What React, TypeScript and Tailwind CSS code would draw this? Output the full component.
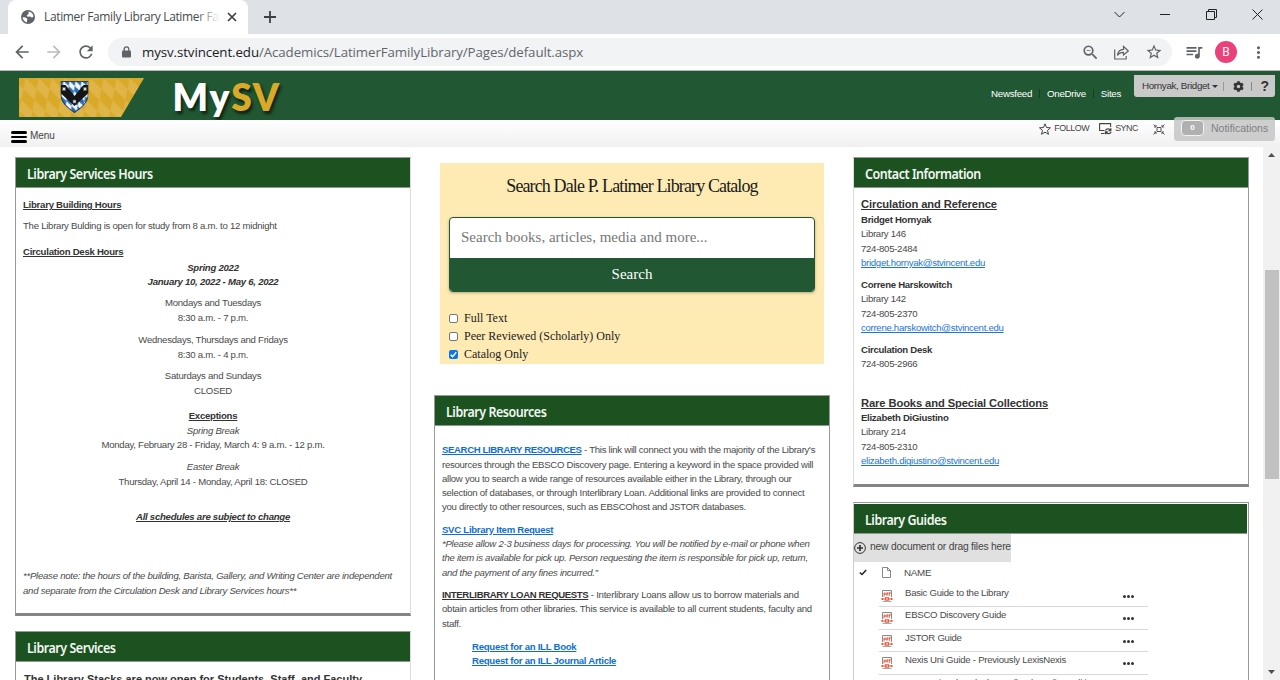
import type { ReactNode } from "react";
import {
  MdArrowBack,
  MdArrowForward,
  MdMoreVert,
  MdOutlineZoomOut,
  MdQueueMusic,
  MdRefresh,
  MdStarBorder,
} from "react-icons/md";
import { FaCog } from "react-icons/fa";

function TabStrip() {
  return (
    <div className="flex h-[34px] shrink-0 items-end bg-[#dee1e6] pl-2">
      <div className="flex h-[34px] w-[240px] items-center rounded-t-lg bg-white pl-[13px] pr-[10px]">
        <svg className="h-[14px] w-[14px] shrink-0" viewBox="0 0 14 14">
          <circle cx="7" cy="7" r="7" fill="#5f6368" />
          <path d="M1.500 7.300l3.200.2 1.800 1.600-.6 1.700.3 1.700C3.500 12 1.600 9.800 1.500 7.300z" fill="#fff" />
          <path d="M7.500 1.500c2.600.2 4.700 2.200 5 4.800l-1.400 1.500-2-1.300-2.600.2-.8-1.500 1.900-1.100z" fill="#fff" />
        </svg>
        <div className="relative ml-[9px] w-[176px] overflow-hidden whitespace-nowrap font-['Open_Sans',sans-serif] text-[12px] leading-[18px] tracking-[-0.360px] text-[#45494d]">
          Latimer Family Library Latimer Fami
          <div className="absolute inset-y-0 right-0 w-[24px] bg-gradient-to-r from-white/0 to-white" />
        </div>
        <svg className="ml-[7px] h-[10px] w-[10px] shrink-0" viewBox="0 0 10 10" stroke="#3c4043" strokeWidth="1.7">
          <path d="M1 1l8 8M9 1l-8 8" />
        </svg>
      </div>
      <svg className="mb-[11px] ml-[16px] h-[12px] w-[12px]" viewBox="0 0 12 12" stroke="#3c4043" strokeWidth="1.8">
        <path d="M6 0v12M0 6h12" />
      </svg>
      <div className="ml-auto flex h-[28px] items-center gap-[35px] self-start pr-[17px] text-[#222]">
        <svg className="h-[11px] w-[11px]" viewBox="0 0 11 11" fill="none" stroke="currentColor">
          <path d="M0.5 3l5 5 5-5" />
        </svg>
        <svg className="h-[11px] w-[11px]" viewBox="0 0 11 11" fill="none" stroke="currentColor">
          <path d="M0 5.5h10" />
        </svg>
        <svg className="h-[11px] w-[11px]" viewBox="0 0 11 11" fill="none" stroke="currentColor">
          <path d="M0.5 2.5h8v8h-8zM2.5 2.5v-2h8v8h-2" />
        </svg>
        <svg className="h-[11px] w-[11px]" viewBox="0 0 11 11" fill="none" stroke="currentColor">
          <path d="M0.5 0.5l10 10M10.500 0.500l-10 10" />
        </svg>
      </div>
    </div>
  );
}

function Toolbar() {
  return (
    <div className="flex h-[37px] shrink-0 items-center border-b border-[#b5babd] bg-white pl-[12px] text-[#5f6368]">
      <MdArrowBack className="h-[20px] w-[20px]" />
      <MdArrowForward className="ml-[12px] h-[20px] w-[20px] text-[#babcbe]" />
      <MdRefresh className="ml-[12px] h-[20px] w-[20px]" />
      <div className="ml-[12px] flex h-[28px] w-[1064px] items-center rounded-full bg-[#f1f3f4] pl-[14px] pr-[9px]">
        <svg className="h-[12px] w-[9px]" viewBox="0 0 9 12">
          <rect y="4.500" width="9" height="7" rx="1" fill="#5f6368" />
          <path d="M2.200 5V3.200a2.300 2.300 0 014.600 0V5" fill="none" stroke="#5f6368" strokeWidth="1.300" />
        </svg>
        <span className="ml-[11px] whitespace-nowrap font-['Open_Sans',sans-serif] text-[13.300px] leading-[20px] tracking-[-0.095px] text-[#63676b]">
          <span className="text-[#202124]">mysv.stvincent.edu</span>/Academics/LatimerFamilyLibrary/Pages/default.aspx
        </span>
        <MdOutlineZoomOut className="ml-auto h-[19px] w-[19px]" />
        <svg className="ml-[14px] mr-[1px] h-[15px] w-[15px]" viewBox="0 0 15 15" fill="none" stroke="currentColor" strokeWidth="1.2">
          <path d="M0.700 4.500v9.500h11.500v-3" />
          <path d="M3.500 10.500c.4-4 2.500-6 6-6.200V1.500L14.300 6 9.500 10V7.400c-2.700 0-4.600.9-6 3.100z" />
        </svg>
        <MdStarBorder className="ml-[15px] h-[18px] w-[18px]" />
      </div>
      <MdQueueMusic className="ml-[12px] h-[20px] w-[20px]" />
      <div className="ml-[11px] flex h-[22px] w-[22px] items-center justify-center rounded-full bg-[#ec407a] font-['Roboto',sans-serif] text-[12px] text-white">
        B
      </div>
      <MdMoreVert className="ml-[12px] h-[19px] w-[19px]" />
    </div>
  );
}

function CrestBanner() {
  return (
    <svg className="h-[39px] w-[125px]" viewBox="0 0 125 39">
      <defs>
        <pattern id="lozenge" width="13" height="22" patternUnits="userSpaceOnUse" patternTransform="skewX(22)">
          <rect width="13" height="22" fill="#d9a928" />
          <path d="M6.500 0L13 11 6.500 22 0 11z" fill="#dfb548" />
        </pattern>
        <pattern id="bavaria" width="6" height="10" patternUnits="userSpaceOnUse" patternTransform="skewX(24)">
          <rect width="6" height="10" fill="#2a6db4" />
          <path d="M3 0l3 5-3 5-3-5z" fill="#f4f7fa" />
        </pattern>
        <clipPath id="shield">
          <path d="M0 0h28v13c0 9-7 14-14 19C7 27 0 22 0 13z" />
        </clipPath>
      </defs>
      <path d="M0 0h125l-23 39H0z" fill="url(#lozenge)" />
      <g transform="translate(41.500 3)" clipPath="url(#shield)">
        <rect width="28" height="33" fill="url(#bavaria)" />
        <path d="M0 4h5l9 11 9-11h5v8L14 25 0 12z" fill="#151515" />
        <path d="M2 6.500h3v3H2zM23 6.500h3v3h-3zM12.500 19h3v3h-3z" fill="#ddd" stroke="#555" strokeWidth=".6" />
        <path d="M0 0h28v13c0 9-7 14-14 19C7 27 0 22 0 13z" fill="none" stroke="#22364a" strokeWidth="1.6" />
      </g>
    </svg>
  );
}

function SiteHeader() {
  return (
    <header className="flex h-[49px] shrink-0 items-start bg-[#215732] pl-[18.500px]">
      <div className="pt-[7px]">
        <CrestBanner />
      </div>
      <div className="ml-[29px] mt-[2px] font-['Lato',sans-serif] text-[37px] font-extrabold leading-[48px] tracking-[1.800px] text-white [text-shadow:2px_3px_3px_rgba(0,0,0,0.6)]">
        My<span className="text-[#d9a928]">SV</span>
      </div>
      <nav className="ml-auto mt-[16px] flex items-center whitespace-nowrap font-['Liberation_Sans',sans-serif] text-[9.750px] leading-[13px] tracking-[-0.300px] text-white">
        <span>Newsfeed</span>
        <span className="mx-[7px] h-[9px] w-px bg-[#143d20]" />
        <span>OneDrive</span>
        <span className="mx-[7px] h-[9px] w-px bg-[#143d20]" />
        <span>Sites</span>
      </nav>
      <div className="ml-[13px] mr-[5px] mt-[4px] flex h-[22px] w-[141px] items-center rounded-b-[3px] bg-[#c9c9c9] pl-[8px] font-['Liberation_Sans',sans-serif] text-[9.750px] text-[#333]">
        <span className="whitespace-nowrap tracking-[-0.320px]">Hornyak, Bridget</span>
        <svg className="ml-[2px] h-[3px] w-[6px]" viewBox="0 0 6 3">
          <path d="M0 0h6L3 3z" fill="#333" />
        </svg>
        <span className="ml-[5px] h-[9px] w-px bg-[#999]" />
        <FaCog className="ml-[9px] h-[11px] w-[11px]" />
        <span className="ml-[7px] h-[9px] w-px bg-[#888]" />
        <span className="ml-[9px] text-[14px] font-bold leading-[16px]">?</span>
      </div>
    </header>
  );
}

function MenuBar() {
  return (
    <div className="relative flex h-[27px] shrink-0 items-start bg-gradient-to-b from-white to-[#f0f0f0] font-['Liberation_Sans',sans-serif]">
      <div className="ml-[11px] mt-[11px] flex w-[16px] flex-col gap-[2px]">
        <span className="h-[2.500px] rounded-sm bg-black" />
        <span className="h-[2.500px] rounded-sm bg-black" />
        <span className="h-[2.500px] rounded-sm bg-black" />
      </div>
      <span className="ml-[3px] mt-[9px] text-[10px] leading-[13px] tracking-[-0.100px] text-[#444]">Menu</span>
      <div className="ml-auto mr-[115px] mt-[2px] flex h-[14px] items-center whitespace-nowrap text-[8.900px] tracking-[-0.450px] text-[#444]">
        <svg className="h-[12px] w-[12px]" viewBox="0 0 12 12" fill="none" stroke="#444" strokeWidth="1">
          <path d="M6 .8l1.500 3.700 4 .3-3 2.600 1 3.900L6 9.200l-3.500 2.100 1-3.900-3-2.600 4-.3z" />
        </svg>
        <span className="ml-[3px]">FOLLOW</span>
        <svg className="ml-[10px] h-[12px] w-[13px]" viewBox="0 0 13 12" fill="none" stroke="#444" strokeWidth="1.100">
          <path d="M5.500 7.500H.6V.6h11v3.500M2 10.500h3.500" />
          <path d="M6.500 7.500c.8-2 4-2.200 5-.2M11.800 5.300v2.400H9.500M12 9c-.8 2-4 2.300-5 .3M6.500 11.300V9h2.300" strokeWidth="1.300" />
        </svg>
        <span className="ml-[3px]">SYNC</span>
        <svg className="ml-[15px] h-[11px] w-[12px]" viewBox="0 0 12 11" fill="none" stroke="#555" strokeWidth="1">
          <path d="M4 3.500h4v4H4zM.5.500l2.500 2.300M11.500.500L9 2.800M.5 10.500L3 8.200M11.500 10.500L9 8.200M1 3h2V1M11 3H9V1M1 8h2v2M11 8H9v2" />
        </svg>
      </div>
      <div className="absolute right-[5px] top-[-3px] flex h-[24px] w-[101px] items-center rounded-[3px] bg-[#c5c5c5]/85 pb-[2px] pl-[7px]">
        <span className="flex h-[16px] w-[23px] items-center justify-center rounded-[4px] border-[1.500px] border-[#f2f2f2] bg-[#b0b0b0] text-[8px] font-bold text-white">
          0
        </span>
        <span className="ml-[7px] text-[10.500px] leading-[14px] text-[#808080]">Notifications</span>
      </div>
    </div>
  );
}

function PanelTitle({ children }: { children: ReactNode }) {
  return (
    <h2 className="h-[30px] shrink-0 whitespace-nowrap border-b border-[#8d978f] bg-[#1b5220] pl-[11px] font-['Noto_Sans',sans-serif] text-[13.500px] font-semibold leading-[32px] tracking-[-0.500px] text-[#f3f6f3]">
      <span className="inline-block origin-left scale-x-[0.925]">{children}</span>
    </h2>
  );
}

function HoursPanel() {
  return (
    <section className="flex h-[459px] shrink-0 flex-col whitespace-nowrap border-b-[3px] border-l border-r border-t border-b-[#858585] border-l-[#999] border-r-[#ddd] border-t-[#999]">
      <PanelTitle>Library Services Hours</PanelTitle>
      <div className="px-[7px] pt-[10px]">
        <p className="font-bold text-[#333] underline">Library Building Hours</p>
        <p className="mt-[6px]">The Library Bulding is open for study from 8 a.m. to 12 midnight</p>
        <p className="mt-[12px] font-bold text-[#333] underline">Circulation Desk Hours</p>
        <div className="text-center">
          <p className="mt-[1px] font-bold italic text-[#333]">
            Spring 2022
            <br />
            January 10, 2022 - May 6, 2022
          </p>
          <p className="mt-[6.500px]">
            Mondays and Tuesdays
            <br />
            8:30 a.m. - 7 p.m.
          </p>
          <p className="mt-[7.300px]">
            Wednesdays, Thursdays and Fridays
            <br />
            8:30 a.m. - 4 p.m.
          </p>
          <p className="mt-[7.300px]">
            Saturdays and Sundays
            <br />
            CLOSED
          </p>
          <p className="mt-[10.500px] font-bold text-[#333] underline">Exceptions</p>
          <p>
            <em>Spring Break</em>
            <br />
            Monday, February 28 - Friday, March 4: 9 a.m. - 12 p.m.
          </p>
          <p className="mt-[7.500px]">
            <em>Easter Break</em>
            <br />
            Thursday, April 14 - Monday, April 18: CLOSED
          </p>
          <p className="mt-[20.500px] font-bold italic text-[#333] underline">All schedules are subject to change</p>
        </div>
        <p className="mt-[44.500px] italic">
          **Please note: the hours of the building, Barista, Gallery, and Writing Center are independent
          <br />
          and separate from the Circulation Desk and Library Services hours**
        </p>
      </div>
    </section>
  );
}

function ServicesPanel() {
  return (
    <section className="mt-[15px] h-[120px] shrink-0 whitespace-nowrap border border-[#999] border-r-[#ddd]">
      <PanelTitle>Library Services</PanelTitle>
      <p className="mt-[9px] pl-[8px] text-[11px] font-bold leading-[16px] tracking-normal text-[#333]">
        The Library Stacks are now open for Students, Staff, and Faculty
      </p>
    </section>
  );
}

function CheckRow({ label, checked }: { label: string; checked?: boolean }) {
  return (
    <label className="flex h-[18px] items-center font-['Liberation_Serif',serif] text-[12px] tracking-normal text-[#222]">
      <span
        className={
          checked
            ? "flex h-[9px] w-[9px] items-center justify-center rounded-[2px] bg-[#0b74e8]"
            : "h-[9px] w-[9px] rounded-[2px] border border-[#777] bg-white"
        }
      >
        {checked && (
          <svg className="h-[7px] w-[7px]" viewBox="0 0 7 7" fill="none" stroke="#fff" strokeWidth="1.400">
            <path d="M.7 3.700l1.900 1.900L6.300 1.300" />
          </svg>
        )}
      </span>
      <span className="ml-[6px]">{label}</span>
    </label>
  );
}

function CatalogSearch() {
  return (
    <section className="ml-[6px] mt-[6px] h-[201px] w-[384px] shrink-0 bg-[#feebb4] pl-[9px] pr-[9px] font-['Liberation_Serif',serif] tracking-normal">
      <h2 className="pt-[11px] text-center text-[18px] leading-[24px] tracking-[-0.880px] text-[#1a1a1a]">
        Search Dale P. Latimer Library Catalog
      </h2>
      <div className="mt-[19px] h-[75px] overflow-hidden rounded-[4px] border border-[#215732] bg-white shadow-[0_1px_3px_rgba(0,0,0,0.3)]">
        <div className="flex h-[40px] items-center pb-px pl-[11px] text-[15px] text-[#777]">
          Search books, articles, media and more...
        </div>
        <div className="flex h-[34px] items-center justify-center bg-[#215732] pb-[2px] text-[15px] text-white">Search</div>
      </div>
      <div className="mt-[17.500px]">
        <CheckRow label="Full Text" />
        <CheckRow label="Peer Reviewed (Scholarly) Only" />
        <CheckRow label="Catalog Only" checked />
      </div>
    </section>
  );
}

function ResourcesPanel() {
  return (
    <section className="mt-[31px] h-[340px] shrink-0 whitespace-nowrap border border-[#999]">
      <PanelTitle>Library Resources</PanelTitle>
      <div className="pl-[7px] pt-[17.300px] leading-[14.300px] tracking-[-0.275px]">
        <p>
          <a className="font-bold tracking-[-0.380px] text-[#0f6fd1] underline">SEARCH LIBRARY RESOURCES</a> - This link will connect you with the majority of the Library's
          <br />
          resources through the EBSCO Discovery page. Entering a keyword in the space provided will
          <br />
          allow you to search a wide range of resources available either in the Library, through our
          <br />
          selection of databases, or through Interlibrary Loan. Additional links are provided to connect
          <br />
          you directly to other resources, such as EBSCOhost and JSTOR databases.
        </p>
        <p className="mt-[8px]">
          <a className="font-bold text-[#0f6fd1] underline">SVC Library Item Request</a>
          <br />
          <em>
            *Please allow 2-3 business days for processing. You will be notified by e-mail or phone when
            <br />
            the item is available for pick up. Person requesting the item is responsible for pick up, return,
            <br />
            and the payment of any fines incurred.”
          </em>
        </p>
        <p className="mt-[8px]">
          <span className="font-bold tracking-[-0.380px] text-[#333] underline">INTERLIBRARY LOAN REQUESTS</span>
          <span className="tracking-[-0.230px]"> - Interlibrary Loans allow us to borrow materials and</span>
          <br />
          <span className="tracking-[-0.245px]">
            obtain articles from other libraries. This service is available to all current students, faculty and
          </span>
          <br />
          staff.
        </p>
        <p className="mt-[9px] pl-[30px] font-bold text-[#0f6fd1]">
          <a className="underline">Request for an ILL Book</a>
          <br />
          <a className="underline">Request for an ILL Journal Article</a>
        </p>
      </div>
    </section>
  );
}

function ContactPanel() {
  return (
    <section className="h-[330px] shrink-0 whitespace-nowrap border-b-[3px] border-l border-r border-t border-b-[#858585] border-l-[#ddd] border-r-[#999] border-t-[#999]">
      <PanelTitle>Contact Information</PanelTitle>
      <div className="pl-[7px] pt-[8px] leading-[14.500px] tracking-[-0.290px]">
        <p className="text-[11.200px] font-bold leading-[16px] tracking-[-0.110px] text-[#333] underline">Circulation and Reference</p>
        <p className="pt-[0.600px]">
          <b className="text-[#333]">Bridget Hornyak</b>
          <br />
          Library 146
          <br />
          724-805-2484
          <br />
          <a className="text-[#1b76d6] underline">bridget.hornyak@stvincent.edu</a>
        </p>
        <p className="mt-[7.200px]">
          <b className="text-[#333]">Correne Harskowitch</b>
          <br />
          Library 142
          <br />
          724-805-2370
          <br />
          <a className="text-[#1b76d6] underline">correne.harskowitch@stvincent.edu</a>
        </p>
        <p className="mt-[7.200px]">
          <b className="text-[#333]">Circulation Desk</b>
          <br />
          724-805-2966
        </p>
        <p className="mt-[23px] text-[11.200px] font-bold leading-[16px] tracking-[-0.110px] text-[#333] underline">
          Rare Books and Special Collections
        </p>
        <p>
          <b className="text-[#333]">Elizabeth DiGiustino</b>
          <br />
          Library 214
          <br />
          724-805-2310
          <br />
          <a className="text-[#1b76d6] underline">elizabeth.digiustino@stvincent.edu</a>
        </p>
      </div>
    </section>
  );
}

function PdfIcon() {
  return (
    <svg className="h-[12px] w-[12px] shrink-0" viewBox="0 0 12 12" fill="none">
      <path d="M1.500 7V.5h9V7" stroke="#8a8a8a" />
      <path d="M1.500 11.500h9" stroke="#aaa" />
      <path d="M3 6.500V3h1.300v1.500H3M6.800 2v3H5.300V3.300h1.500M8.300 6V2.300h1.500M7.800 3.500h1.700" stroke="#ea5a40" strokeWidth=".9" />
      <path d="M0 9h4M8 9h4M4.500 7.800h3v2.400h-3zM1.500 8v2M10.500 8v2" stroke="#ea5a40" strokeWidth="1.200" />
    </svg>
  );
}

const guides = [
  "Basic Guide to the Library",
  "EBSCO Discovery Guide",
  "JSTOR Guide",
  "Nexis Uni Guide - Previously LexisNexis",
  "Occupational Outlook Handbook: Online Edition",
];

function GuidesPanel() {
  return (
    <section className="mt-[15px] h-[220px] shrink-0 whitespace-nowrap border border-[#999] border-l-[#ccc] pr-px pt-px">
      <PanelTitle>Library Guides</PanelTitle>
      <div className="flex h-[28px] w-[157px] items-center bg-[#e0e0e0] pb-px text-[10.300px] tracking-[-0.200px] text-[#444]">
        <svg className="h-[12px] w-[12px] shrink-0" viewBox="0 0 12 12" fill="none" stroke="#333">
          <circle cx="6" cy="6" r="5.400" />
          <path d="M6 3v6M3 6h6" strokeWidth="1.700" />
        </svg>
        <span className="ml-[4px]">new document or drag files here</span>
      </div>
      <div className="flex h-[23px] items-center pl-[5px]">
        <svg className="mb-[3px] h-[7px] w-[8px]" viewBox="0 0 8 7" fill="none" stroke="#222" strokeWidth="1.500">
          <path d="M.8 3.500l2.200 2L7.200 1" />
        </svg>
        <svg className="mb-[2px] ml-[15px] h-[11px] w-[9px]" viewBox="0 0 9 11" fill="none" stroke="#888">
          <path d="M.5.500h5l3 3v7h-8zM5.500.500v3h3" />
        </svg>
        <span className="ml-[13px] text-[9.800px]">NAME</span>
      </div>
      <div className="ml-[25px] w-[269px]">
        {guides.map((name) => (
          <div key={name} className="flex h-[22.400px] items-start border-b border-[#d8d8d8]">
            <div className="ml-[2px] mt-[5px]">
              <PdfIcon />
            </div>
            <span className="ml-[12px] leading-[16px]">{name}</span>
            <span className="ml-auto mr-[14px] mt-[10px] flex gap-px">
              <i className="h-[3px] w-[3px] rounded-full bg-[#333]" />
              <i className="h-[3px] w-[3px] rounded-full bg-[#333]" />
              <i className="h-[3px] w-[3px] rounded-full bg-[#333]" />
            </span>
          </div>
        ))}
      </div>
    </section>
  );
}

function Scrollbar() {
  return (
    <div className="ml-auto flex w-[17px] flex-col items-center bg-[#f1f1f1]">
      <svg className="mt-[6px] h-[4px] w-[7px] shrink-0" viewBox="0 0 7 4">
        <path d="M0 4h7L3.500 0z" fill="#505050" />
      </svg>
      <div className="mt-[113px] h-[209px] w-[14px] shrink-0 bg-[#c1c1c1]" />
      <svg className="mb-[6px] mt-auto h-[4px] w-[7px] shrink-0" viewBox="0 0 7 4">
        <path d="M0 0h7L3.500 4z" fill="#505050" />
      </svg>
    </div>
  );
}

export default function App() {
  return (
    <div className="flex h-[680px] w-[1280px] flex-col overflow-hidden bg-white">
      <TabStrip />
      <Toolbar />
      <SiteHeader />
      <MenuBar />
      <main className="flex min-h-0 flex-1 overflow-hidden pl-[15px] font-['Liberation_Sans',sans-serif] text-[9.600px] leading-[14.600px] tracking-[-0.260px] text-[#4a4a4a]">
        <div className="flex w-[396px] shrink-0 flex-col pt-[10px]">
          <HoursPanel />
          <ServicesPanel />
        </div>
        <div className="ml-[23px] flex w-[396px] shrink-0 flex-col pt-[10px]">
          <CatalogSearch />
          <ResourcesPanel />
        </div>
        <div className="ml-[23px] flex w-[396px] shrink-0 flex-col pt-[10px]">
          <ContactPanel />
          <GuidesPanel />
        </div>
        <Scrollbar />
      </main>
    </div>
  );
}
